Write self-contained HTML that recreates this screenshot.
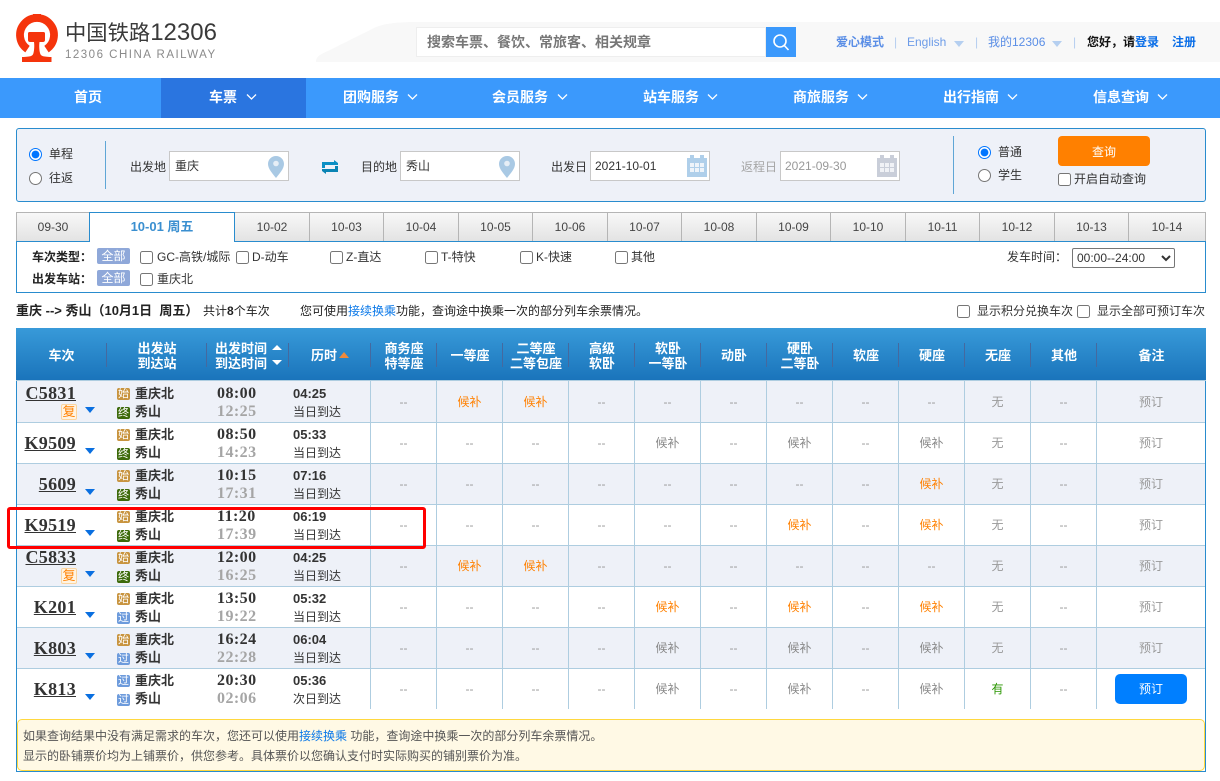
<!DOCTYPE html>
<html lang="zh"><head><meta charset="utf-8"><title>12306</title>
<style>
*{box-sizing:border-box}
html,body{margin:0;padding:0;background:#fff}
body{width:1220px;height:781px;position:relative;overflow:hidden;font:12px/18px "Liberation Sans","Noto Sans CJK SC",sans-serif;color:#333}
.t{position:absolute;white-space:nowrap}
input{margin:0;position:absolute}
.nav{position:absolute;left:0;top:78px;width:1220px;height:40px;background:#3b99fc}
.nav b{position:absolute;top:0;line-height:39px;font-size:14px;color:#fff;white-space:nowrap}
.nav svg{position:absolute;top:15px}
.ipt{position:absolute;top:151px;width:120px;height:30px;background:#fff;border:1px solid #c8c8c8;line-height:28px;padding-left:5px;color:#333}
.tab{position:absolute;top:212px;height:30px;border:1px solid #b5b5b5;border-left:0;border-bottom:1px solid #298cce;background:linear-gradient(#f8f8f8,#e3e3e3);text-align:center;line-height:28px;color:#444}
.bd{position:absolute;width:33px;height:16px;background:#8fa8d9;color:#fff;text-align:center;line-height:16px;border-radius:2px}
.hd{position:absolute;left:16px;top:328px;width:1190px;height:53px;background:linear-gradient(#389ad9,#1a74bb);border-bottom:1px solid #aecde0}
.hd b{position:absolute;top:0;height:55px;display:flex;align-items:center;justify-content:center;text-align:center;color:#fff;font-size:13px;line-height:15px}
.hd i{position:absolute;top:15px;height:24px;width:1px;background:#45699f}
.r{position:absolute;left:17px;width:1188px;height:41px;border-bottom:1px solid #aecde0}
.r.o{background:#eef1f8}
.r>*{position:absolute;white-space:nowrap}
.c{right:1129px;top:10px;font:bold 18px/20px "Liberation Serif","Noto Serif CJK SC",serif;text-decoration:underline;color:#333;letter-spacing:.3px}
.c.u{top:1px}
.ar{left:68px;top:25px;width:0;height:0;border:5px solid transparent;border-top:6px solid #0a6fe0;border-bottom:0}
.fu{left:44px;top:22px;width:16px;height:16px;background:#fff4e3;border:1px solid #fbd5a0;color:#ff8000;text-align:center;font-size:13px;line-height:14px;border-radius:2px}
.ic{left:100px;width:13px;height:12px;color:#fff;font-size:11px;line-height:12px;text-align:center;border-radius:2px;overflow:hidden}
.s1{background:#c8943f;top:6px}.z2{background:#3d6a0a;top:25px}.g1{background:#6d9bdc;top:6px}.g2{background:#6d9bdc;top:25px}
.n1,.n2{left:118px;font-weight:bold;font-size:13px;line-height:18px;color:#333}
.n1{top:3px}.n2{top:21px}
.t1,.t2{left:200px;font:bold 16px/18px "Liberation Serif",serif;letter-spacing:.45px}
.t1{top:3px;color:#333}.t2{top:21px;color:#a5a5a5}
.d1,.d2{left:276px}
.d1{top:3px;font-weight:bold;font-size:13px;color:#333}
.d2{top:21px;color:#333}
.sc{left:353px;top:-1px;height:41px;display:flex}
.sc span{display:block;width:66px;height:41px;border-left:1px solid #aecde0;text-align:center;line-height:43px;color:#999}
.sc span:last-child{width:109px}
.sc .o{color:#ff8000}.sc .g{color:#888}.sc .y{color:#2a9600}
.btn{position:absolute;left:1115px;top:674px;width:72px;height:30px;background:#007fff;color:#fff;border-radius:5px;text-align:center;line-height:30px}
a{color:#0a78e8;text-decoration:none}
</style></head><body>

<svg class="t" style="left:0;top:0" width="62" height="70" viewBox="0 0 62 70">
<path fill="none" stroke="#f5340c" stroke-width="7.800" d="M27.500 49.100A17 17 0 1 1 46.500 49.100"/>
<rect x="33" y="14" width="8" height="6" fill="#f5340c"/>
<path fill="#f5340c" d="M28 33.500c0-.9.600-1.500 1.500-1.500h14c.9 0 1.500.6 1.500 1.500V40c0 1.200-.8 2-2 2h-3.500c-.5 3-.3 8 .5 11 .4 1.500 1 2.500 2.500 3 1.600.6 4 .9 9 1v5H22v-5c5-.1 7.400-.4 9-1 1.500-.5 2.100-1.500 2.500-3 .8-3 1-8 .5-11h-4c-1.200 0-2-.8-2-2z"/>
</svg>
<div class="t" style="left:65px;top:19px;font-size:21.300px;line-height:28px;color:#3a3a3a">中国铁路<span style="font-size:24px">12306</span></div>
<div class="t" style="left:65px;top:47px;font-size:11.500px;line-height:16px;letter-spacing:1.500px;color:#8a8a8a">12306 CHINA RAILWAY</div>

<svg class="t" style="left:310px;top:20px" width="910" height="44"><path fill="#f8f8f8" d="M6 42c0-6 5-8 14-12 20-10 34-17 46-23C76 3 90 2 110 2h800v40z"/></svg>
<div class="t" style="left:416px;top:27px;width:350px;height:30px;background:#fff;border:1px solid #eee;line-height:28px;padding-left:10px;font-size:14px;font-weight:bold;color:#777;overflow:hidden">搜索车票、餐饮、常旅客、相关规章</div>
<div class="t" style="left:766px;top:27px;width:30px;height:30px;background:#3b99fc"></div>
<svg class="t" style="left:771px;top:32px" width="20" height="20" fill="none" stroke="#fff" stroke-width="1.600"><circle cx="9" cy="9" r="6"/><path d="M13.300 13.500L17.500 18"/></svg>

<div class="t" style="left:836px;top:33px;color:#5a8ee6;font-weight:bold">爱心模式</div>
<div class="t" style="left:894px;top:33px;color:#b5cdf0">|</div>
<div class="t" style="left:907px;top:33px;color:#6d9ce8">English</div>
<div class="t" style="left:954px;top:41px;width:0;height:0;border:5px solid transparent;border-top:6px solid #b5cff0;border-bottom:0"></div>
<div class="t" style="left:975px;top:33px;color:#b5cdf0">|</div>
<div class="t" style="left:988px;top:33px;color:#5a8ee6">我的12306</div>
<div class="t" style="left:1052px;top:41px;width:0;height:0;border:5px solid transparent;border-top:6px solid #b5cff0;border-bottom:0"></div>
<div class="t" style="left:1073px;top:33px;color:#b5cdf0">|</div>
<div class="t" style="left:1087px;top:33px;color:#111;font-weight:bold">您好，请<span style="color:#0a6ee8">登录</span></div>
<div class="t" style="left:1172px;top:33px;color:#0a6ee8;font-weight:bold">注册</div>

<div class="nav">
<div style="position:absolute;left:161px;top:0;width:145px;height:40px;background:#2a75e0"></div>
<b style="left:74px">首页</b>
<b style="left:209px">车票</b>
<b style="left:343px">团购服务</b>
<b style="left:492px">会员服务</b>
<b style="left:643px">站车服务</b>
<b style="left:793px">商旅服务</b>
<b style="left:943px">出行指南</b>
<b style="left:1093px">信息查询</b>
<svg style="left:246px" width="11" height="8" fill="none" stroke="#fff" stroke-width="1.300"><path d="M1 1.500l4.500 4.500 4.500-4.500"/></svg>
<svg style="left:407px" width="11" height="8" fill="none" stroke="#fff" stroke-width="1.300"><path d="M1 1.500l4.500 4.500 4.500-4.500"/></svg>
<svg style="left:557px" width="11" height="8" fill="none" stroke="#fff" stroke-width="1.300"><path d="M1 1.500l4.500 4.500 4.500-4.500"/></svg>
<svg style="left:707px" width="11" height="8" fill="none" stroke="#fff" stroke-width="1.300"><path d="M1 1.500l4.500 4.500 4.500-4.500"/></svg>
<svg style="left:857px" width="11" height="8" fill="none" stroke="#fff" stroke-width="1.300"><path d="M1 1.500l4.500 4.500 4.500-4.500"/></svg>
<svg style="left:1007px" width="11" height="8" fill="none" stroke="#fff" stroke-width="1.300"><path d="M1 1.500l4.500 4.500 4.500-4.500"/></svg>
<svg style="left:1157px" width="11" height="8" fill="none" stroke="#fff" stroke-width="1.300"><path d="M1 1.500l4.500 4.500 4.500-4.500"/></svg>
</div>

<div class="t" style="left:16px;top:128px;width:1190px;height:74px;background:#eef1f8;border:1px solid #298cce;border-radius:3px"></div>
<input type="radio" name="a" checked style="left:29px;top:148px">
<input type="radio" name="a" style="left:29px;top:172px">
<div class="t" style="left:49px;top:145px">单程</div>
<div class="t" style="left:49px;top:169px">往返</div>
<div class="t" style="left:105px;top:141px;width:1px;height:48px;background:#5fa6d6"></div>
<div class="t" style="left:130px;top:158px">出发地</div>
<div class="ipt" style="left:169px">重庆</div>
<svg class="t" style="left:268px;top:156px" width="16" height="22"><path fill="#a9c9e4" d="M8 0C3.500 0 0 3.500 0 8c0 5 5 10 8 14 3-4 8-9 8-14 0-4.500-3.500-8-8-8z"/><circle cx="8" cy="7.500" r="2.800" fill="#e6eef6"/></svg>
<svg class="t" style="left:322px;top:160px" width="16" height="15"><path fill="#0b8fc4" d="M0 2h12V0l4 3v2H3v3H0z"/><path fill="#0a84b4" d="M16 12H4v2L0 11V9h13V6h3z"/></svg>
<div class="t" style="left:361px;top:158px">目的地</div>
<div class="ipt" style="left:400px">秀山</div>
<svg class="t" style="left:499px;top:156px" width="16" height="22"><path fill="#a9c9e4" d="M8 0C3.500 0 0 3.500 0 8c0 5 5 10 8 14 3-4 8-9 8-14 0-4.500-3.500-8-8-8z"/><circle cx="8" cy="7.500" r="2.800" fill="#e6eef6"/></svg>
<div class="t" style="left:551px;top:158px">出发日</div>
<div class="ipt" style="left:590px;padding-left:4px">2021-10-01</div>
<svg class="t" style="left:687px;top:155px" width="20" height="22"><path fill="#afcfea" d="M0 3h3V0h4v3h6V0h4v3h3v19H0z"/><g fill="#eef4fa"><rect x="3" y="8" width="4" height="4"/><rect x="8" y="8" width="4" height="4"/><rect x="13" y="8" width="4" height="4"/><rect x="3" y="13" width="4" height="4"/><rect x="8" y="13" width="4" height="4"/><rect x="13" y="13" width="4" height="4"/></g></svg>
<div class="t" style="left:741px;top:158px;color:#a5a5a5">返程日</div>
<div class="ipt" style="left:780px;color:#999;padding-left:4px">2021-09-30</div>
<svg class="t" style="left:877px;top:155px" width="20" height="22"><path fill="#c9ced9" d="M0 3h3V0h4v3h6V0h4v3h3v19H0z"/><g fill="#f0f2f6"><rect x="3" y="8" width="4" height="4"/><rect x="8" y="8" width="4" height="4"/><rect x="13" y="8" width="4" height="4"/><rect x="3" y="13" width="4" height="4"/><rect x="8" y="13" width="4" height="4"/><rect x="13" y="13" width="4" height="4"/></g></svg>
<div class="t" style="left:953px;top:136px;width:1px;height:58px;background:#5fa6d6"></div>
<input type="radio" name="b" checked style="left:978px;top:146px">
<input type="radio" name="b" style="left:978px;top:169px">
<div class="t" style="left:998px;top:143px">普通</div>
<div class="t" style="left:998px;top:166px">学生</div>
<div class="t" style="left:1058px;top:136px;width:92px;height:30px;background:#ff8000;border-radius:4px;color:#fff;text-align:center;line-height:32px">查询</div>
<input type="checkbox" style="left:1058px;top:173px">
<div class="t" style="left:1074px;top:170px">开启自动查询</div>

<div class="tab" style="left:16px;width:74px;border-left:1px solid #b5b5b5">09-30</div>
<div class="tab" style="left:235px;width:75px">10-02</div>
<div class="tab" style="left:310px;width:74px">10-03</div>
<div class="tab" style="left:384px;width:75px">10-04</div>
<div class="tab" style="left:459px;width:74px">10-05</div>
<div class="tab" style="left:533px;width:75px">10-06</div>
<div class="tab" style="left:608px;width:74px">10-07</div>
<div class="tab" style="left:682px;width:75px">10-08</div>
<div class="tab" style="left:757px;width:74px">10-09</div>
<div class="tab" style="left:831px;width:75px">10-10</div>
<div class="tab" style="left:906px;width:74px">10-11</div>
<div class="tab" style="left:980px;width:75px">10-12</div>
<div class="tab" style="left:1055px;width:74px">10-13</div>
<div class="tab" style="left:1129px;width:77px">10-14</div>
<div class="t" style="left:16px;top:241px;width:1190px;height:52px;border:1px solid #298cce"></div>
<div class="t" style="left:89px;top:212px;width:146px;height:30px;background:#fff;border:1px solid #298cce;border-bottom:0;text-align:center;line-height:28px;color:#3a8fd0;font-weight:bold;font-size:13px">10-01 周五</div>

<div class="t" style="left:32px;top:248px;font-weight:bold;color:#222">车次类型：</div>
<div class="bd" style="left:97px;top:248px">全部</div>
<input type="checkbox" style="left:140px;top:251px"><div class="t" style="left:157px;top:248px">GC-高铁/城际</div>
<input type="checkbox" style="left:236px;top:251px"><div class="t" style="left:252px;top:248px">D-动车</div>
<input type="checkbox" style="left:330px;top:251px"><div class="t" style="left:346px;top:248px">Z-直达</div>
<input type="checkbox" style="left:425px;top:251px"><div class="t" style="left:441px;top:248px">T-特快</div>
<input type="checkbox" style="left:520px;top:251px"><div class="t" style="left:536px;top:248px">K-快速</div>
<input type="checkbox" style="left:615px;top:251px"><div class="t" style="left:631px;top:248px">其他</div>
<div class="t" style="left:1007px;top:248px">发车时间：</div>
<select style="position:absolute;left:1072px;top:248px;width:103px;height:20px;font:12px 'Liberation Sans',sans-serif;color:#333;background:#fff;border:1px solid #767676;border-radius:2px;padding:0"><option>00:00--24:00</option></select>
<div class="t" style="left:32px;top:270px;font-weight:bold;color:#222">出发车站：</div>
<div class="bd" style="left:97px;top:270px">全部</div>
<input type="checkbox" style="left:140px;top:273px"><div class="t" style="left:157px;top:270px">重庆北</div>

<div class="t" style="left:16px;top:302px;color:#222;font-weight:bold;font-size:13px">重庆 --&gt; 秀山（10月1日&nbsp; 周五）</div>
<div class="t" style="left:203px;top:302px;color:#222">共计<b>8</b>个车次</div>
<div class="t" style="left:300px;top:302px;color:#222">您可使用<a href="#">接续换乘</a>功能，查询途中换乘一次的部分列车余票情况。</div>
<input type="checkbox" style="left:957px;top:305px"><div class="t" style="left:977px;top:302px">显示积分兑换车次</div>
<input type="checkbox" style="left:1077px;top:305px"><div class="t" style="left:1097px;top:302px">显示全部可预订车次</div>

<div class="t" style="left:16px;top:328px;width:1190px;height:444px;border:1px solid #298cce;border-top:0"></div>
<div class="hd">
<b style="left:0;width:91px">车次</b><i style="left:90px"></i>
<b style="left:91px;width:100px">出发站<br>到达站</b><i style="left:190px"></i>
<b style="left:191px;width:60px;justify-content:flex-start;padding-left:8px;white-space:nowrap;text-align:left">出发时间<br>到达时间</b><i style="left:272px"></i>
<svg style="position:absolute;left:254px;top:15px" width="14" height="24" fill="#fff"><path d="M2 7l5-5 5 5zM2 17l5 5 5-5z"/></svg>
<b style="left:293px;width:30px;white-space:nowrap">历时</b><i style="left:354px"></i>
<svg style="position:absolute;left:322px;top:23px" width="12" height="8" fill="#f08a3c"><path d="M1 7l5-6 5 6z"/></svg>
<b style="left:355px;width:66px">商务座<br>特等座</b><i style="left:420px"></i>
<b style="left:421px;width:66px">一等座</b><i style="left:486px"></i>
<b style="left:487px;width:66px">二等座<br>二等包座</b><i style="left:552px"></i>
<b style="left:553px;width:66px">高级<br>软卧</b><i style="left:618px"></i>
<b style="left:619px;width:66px">软卧<br>一等卧</b><i style="left:684px"></i>
<b style="left:685px;width:66px">动卧</b><i style="left:750px"></i>
<b style="left:751px;width:66px">硬卧<br>二等卧</b><i style="left:816px"></i>
<b style="left:817px;width:66px">软座</b><i style="left:882px"></i>
<b style="left:883px;width:66px">硬座</b><i style="left:948px"></i>
<b style="left:949px;width:66px">无座</b><i style="left:1014px"></i>
<b style="left:1015px;width:66px">其他</b><i style="left:1080px"></i>
<b style="left:1081px;width:109px">备注</b>
</div>

<div class="r o" style="top:382px;box-shadow:0 -1px 0 #eef1f8"><span class="c u">C5831</span><span class="fu">复</span><span class="ar"></span><span class="ic s1">始</span><span class="ic z2">终</span><span class="n1">重庆北</span><span class="n2">秀山</span><span class="t1">08:00</span><span class="t2">12:25</span><span class="d1">04:25</span><span class="d2">当日到达</span>
<div class="sc"><span>--</span><span class="o">候补</span><span class="o">候补</span><span>--</span><span>--</span><span>--</span><span>--</span><span>--</span><span>--</span><span>无</span><span>--</span><span>预订</span></div></div>

<div class="r" style="top:423px"><span class="c">K9509</span><span class="ar"></span><span class="ic s1">始</span><span class="ic z2">终</span><span class="n1">重庆北</span><span class="n2">秀山</span><span class="t1">08:50</span><span class="t2">14:23</span><span class="d1">05:33</span><span class="d2">当日到达</span>
<div class="sc"><span>--</span><span>--</span><span>--</span><span>--</span><span class="g">候补</span><span>--</span><span class="g">候补</span><span>--</span><span class="g">候补</span><span>无</span><span>--</span><span>预订</span></div></div>

<div class="r o" style="top:464px"><span class="c">5609</span><span class="ar"></span><span class="ic s1">始</span><span class="ic z2">终</span><span class="n1">重庆北</span><span class="n2">秀山</span><span class="t1">10:15</span><span class="t2">17:31</span><span class="d1">07:16</span><span class="d2">当日到达</span>
<div class="sc"><span>--</span><span>--</span><span>--</span><span>--</span><span>--</span><span>--</span><span>--</span><span>--</span><span class="o">候补</span><span>无</span><span>--</span><span>预订</span></div></div>

<div class="r" style="top:505px"><span class="c">K9519</span><span class="ar"></span><span class="ic s1">始</span><span class="ic z2">终</span><span class="n1">重庆北</span><span class="n2">秀山</span><span class="t1">11:20</span><span class="t2">17:39</span><span class="d1">06:19</span><span class="d2">当日到达</span>
<div class="sc"><span>--</span><span>--</span><span>--</span><span>--</span><span>--</span><span>--</span><span class="o">候补</span><span>--</span><span class="o">候补</span><span>无</span><span>--</span><span>预订</span></div></div>

<div class="r o" style="top:546px"><span class="c u">C5833</span><span class="fu">复</span><span class="ar"></span><span class="ic s1">始</span><span class="ic z2">终</span><span class="n1">重庆北</span><span class="n2">秀山</span><span class="t1">12:00</span><span class="t2">16:25</span><span class="d1">04:25</span><span class="d2">当日到达</span>
<div class="sc"><span>--</span><span class="o">候补</span><span class="o">候补</span><span>--</span><span>--</span><span>--</span><span>--</span><span>--</span><span>--</span><span>无</span><span>--</span><span>预订</span></div></div>

<div class="r" style="top:587px"><span class="c">K201</span><span class="ar"></span><span class="ic s1">始</span><span class="ic g2">过</span><span class="n1">重庆北</span><span class="n2">秀山</span><span class="t1">13:50</span><span class="t2">19:22</span><span class="d1">05:32</span><span class="d2">当日到达</span>
<div class="sc"><span>--</span><span>--</span><span>--</span><span>--</span><span class="o">候补</span><span>--</span><span class="o">候补</span><span>--</span><span class="o">候补</span><span>无</span><span>--</span><span>预订</span></div></div>

<div class="r o" style="top:628px"><span class="c">K803</span><span class="ar"></span><span class="ic s1">始</span><span class="ic g2">过</span><span class="n1">重庆北</span><span class="n2">秀山</span><span class="t1">16:24</span><span class="t2">22:28</span><span class="d1">06:04</span><span class="d2">当日到达</span>
<div class="sc"><span>--</span><span>--</span><span>--</span><span>--</span><span class="g">候补</span><span>--</span><span class="g">候补</span><span>--</span><span class="g">候补</span><span>无</span><span>--</span><span>预订</span></div></div>

<div class="r" style="top:669px;border-bottom:0"><span class="c">K813</span><span class="ar"></span><span class="ic g1">过</span><span class="ic g2">过</span><span class="n1">重庆北</span><span class="n2">秀山</span><span class="t1">20:30</span><span class="t2">02:06</span><span class="d1">05:36</span><span class="d2">次日到达</span>
<div class="sc"><span>--</span><span>--</span><span>--</span><span>--</span><span class="g">候补</span><span>--</span><span class="g">候补</span><span>--</span><span class="g">候补</span><span class="y">有</span><span>--</span><span></span></div></div>
<div class="btn">预订</div>

<div class="t" style="left:7px;top:507px;width:419px;height:42px;border:3px solid #f00;border-radius:3px"></div>

<div class="t" style="left:17px;top:719px;width:1188px;height:52px;background:#fff9e5;border:1px solid #ffd83f;border-radius:5px"></div>
<div class="t" style="left:23px;top:727px;color:#555">如果查询结果中没有满足需求的车次，您还可以使用<a href="#">接续换乘</a> 功能，查询途中换乘一次的部分列车余票情况。</div>
<div class="t" style="left:23px;top:747px;color:#555">显示的卧铺票价均为上铺票价，供您参考。具体票价以您确认支付时实际购买的铺别票价为准。</div>

</body></html>
